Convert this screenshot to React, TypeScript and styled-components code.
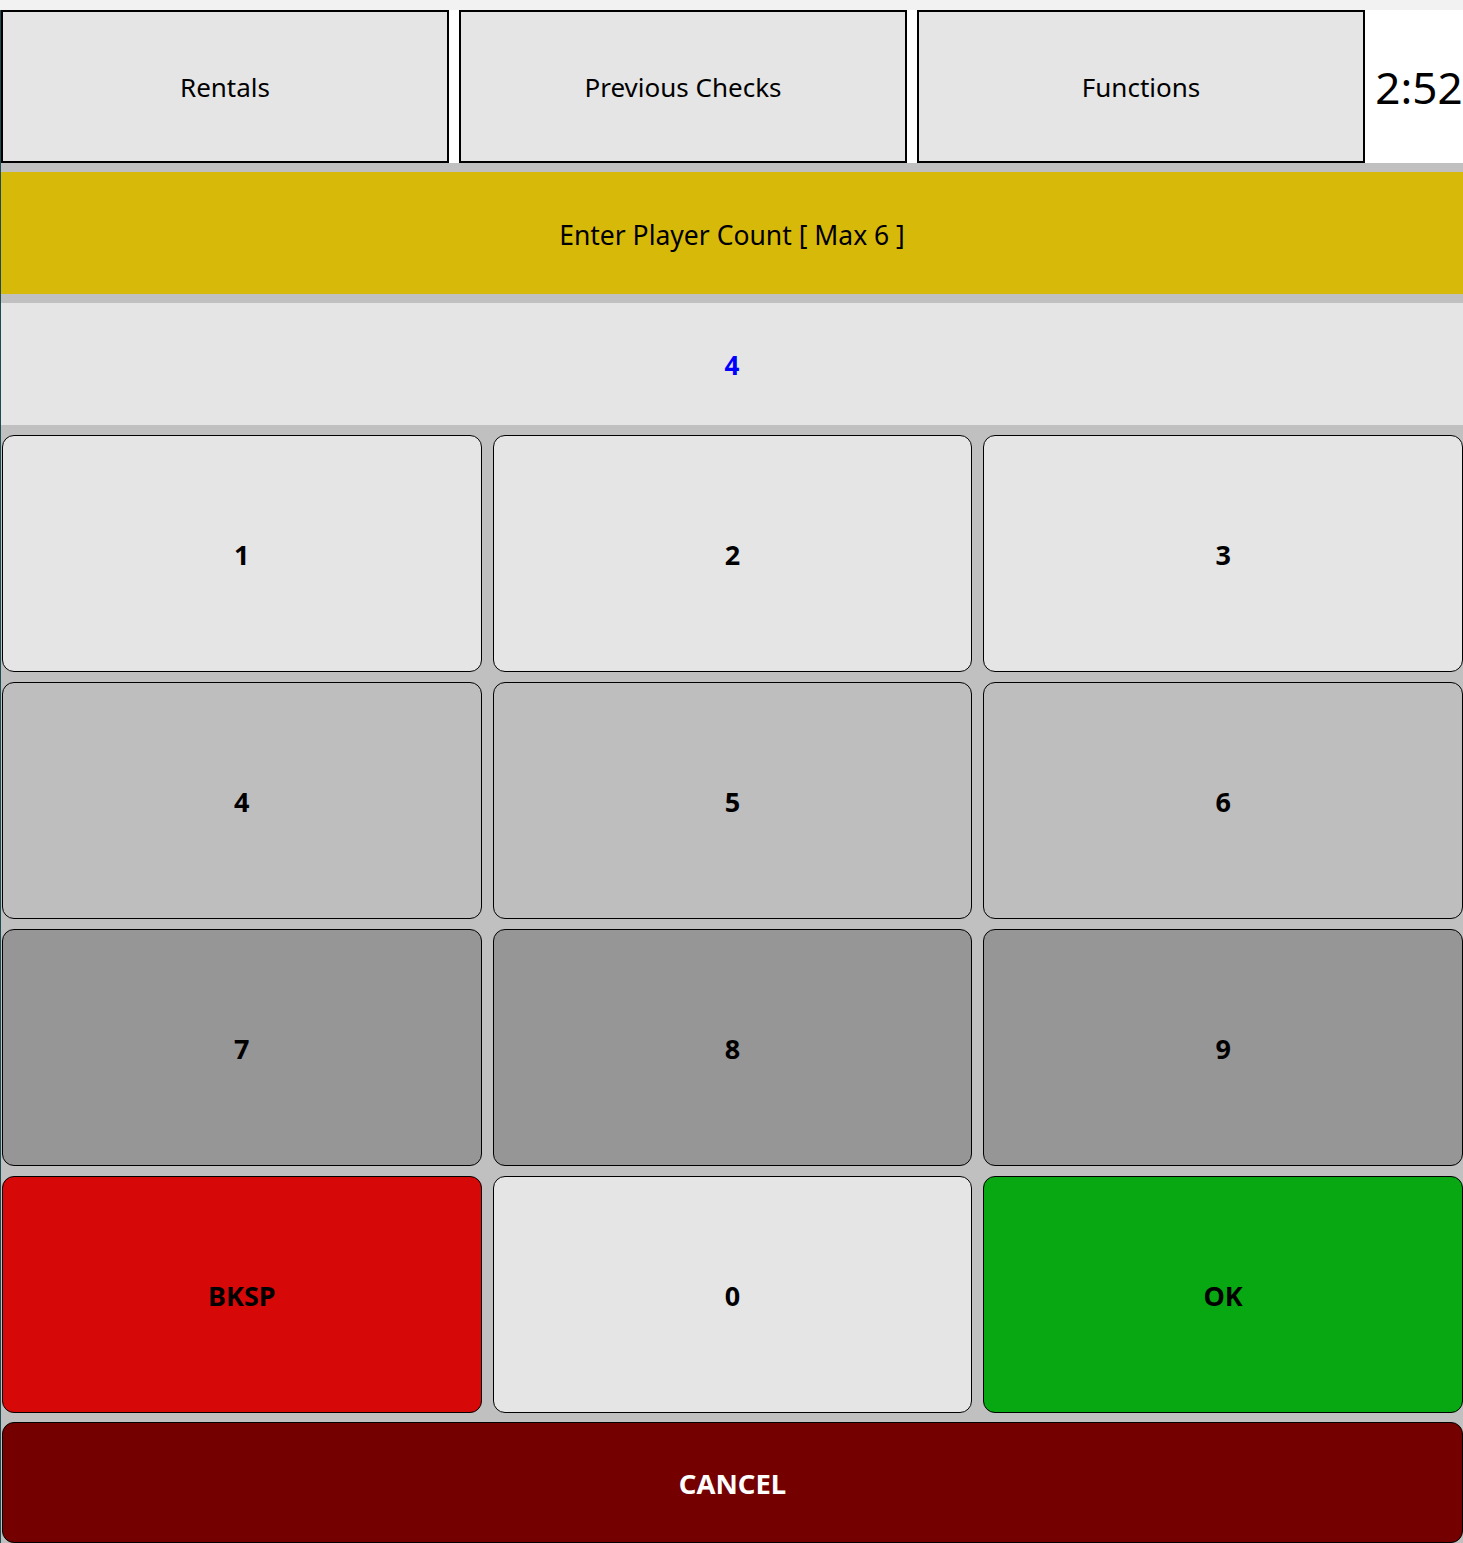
import React from "react";
import styled, { createGlobalStyle } from "styled-components";

const GlobalStyle = createGlobalStyle`
  html, body {
    margin: 0;
    padding: 0;
    background: #f2f2f2;
  }
  * {
    box-sizing: border-box;
  }
`;

type KeyTone = "light" | "mid" | "dark" | "red" | "green";

const toneColors: Record<KeyTone, string> = {
  light: "#e5e5e5",
  mid: "#bebebe",
  dark: "#969696",
  red: "#d60808",
  green: "#08a812",
};

const keys: { label: string; tone: KeyTone }[] = [
  { label: "1", tone: "light" },
  { label: "2", tone: "light" },
  { label: "3", tone: "light" },
  { label: "4", tone: "mid" },
  { label: "5", tone: "mid" },
  { label: "6", tone: "mid" },
  { label: "7", tone: "dark" },
  { label: "8", tone: "dark" },
  { label: "9", tone: "dark" },
  { label: "BKSP", tone: "red" },
  { label: "0", tone: "light" },
  { label: "OK", tone: "green" },
];

export default function App() {
  return (
    <>
      <GlobalStyle />
      <Screen>
        <TopStrip />
        <Frame>
          <Header>
            <NavButton>Rentals</NavButton>
            <NavButton>Previous Checks</NavButton>
            <NavButton>Functions</NavButton>
            <Clock>2:52</Clock>
          </Header>
          <Body>
            <Prompt>Enter Player Count [ Max 6 ]</Prompt>
            <Entry>4</Entry>
            <Keypad>
              {keys.map((k) => (
                <Key key={k.label} tone={k.tone}>
                  {k.label}
                </Key>
              ))}
            </Keypad>
            <CancelButton>CANCEL</CancelButton>
          </Body>
        </Frame>
      </Screen>
    </>
  );
}

const Screen = styled.div`
  width: 1463px;
  height: 1543px;
  overflow: hidden;
  display: flex;
  flex-direction: column;
  font-family: "Noto Sans", "Open Sans", sans-serif;
`;

const TopStrip = styled.div`
  height: 10px;
  background: #f2f2f2;
`;

const Frame = styled.div`
  flex: 1;
  display: flex;
  flex-direction: column;
  border-left: 1px solid #1d4b52;
  background: #c0c0c0;
`;

const Header = styled.div`
  display: flex;
  gap: 10px;
  height: 153px;
  background: #ffffff;
`;

const NavButton = styled.button`
  width: 448px;
  height: 153px;
  padding: 0;
  border: 2px solid #000000;
  background: #e5e5e5;
  color: #000000;
  font-family: inherit;
  font-size: 26px;
  font-weight: 400;
  cursor: pointer;
`;

const Clock = styled.div`
  flex: 1;
  display: flex;
  align-items: center;
  justify-content: center;
  margin-left: -10px;
  padding-left: 10px;
  font-size: 44px;
  color: #000000;
  background: #ffffff;
`;

const Body = styled.div`
  display: flex;
  flex-direction: column;
  padding: 9px 0 0 0;
  gap: 9px;
`;

const Prompt = styled.div`
  height: 122px;
  display: flex;
  align-items: center;
  justify-content: center;
  padding-top: 4px;
  background: #d7b90a;
  color: #000000;
  font-size: 26.5px;
`;

const Entry = styled.div`
  height: 122px;
  display: flex;
  align-items: center;
  justify-content: center;
  padding-top: 2px;
  background: #e5e5e5;
  color: #0000ff;
  font-size: 26px;
  font-weight: 700;
  margin-bottom: 1px;
`;

const Keypad = styled.div`
  display: grid;
  grid-template-columns: repeat(3, 1fr);
  grid-auto-rows: 237px;
  gap: 10px 11px;
  padding-left: 1px;
`;

const Key = styled.button<{ tone: KeyTone }>`
  border: 1px solid #000000;
  border-radius: 12px;
  background: ${(p) => toneColors[p.tone]};
  color: #000000;
  font-family: inherit;
  font-size: 27px;
  font-weight: 700;
  padding-top: 2px;
  cursor: pointer;
`;

const CancelButton = styled.button`
  height: 121px;
  margin: 0 0 0 1px;
  border: 1px solid #000000;
  border-radius: 12px;
  background: #750000;
  color: #ffffff;
  font-family: inherit;
  font-size: 27.5px;
  font-weight: 700;
  padding-top: 2px;
  cursor: pointer;
`;
